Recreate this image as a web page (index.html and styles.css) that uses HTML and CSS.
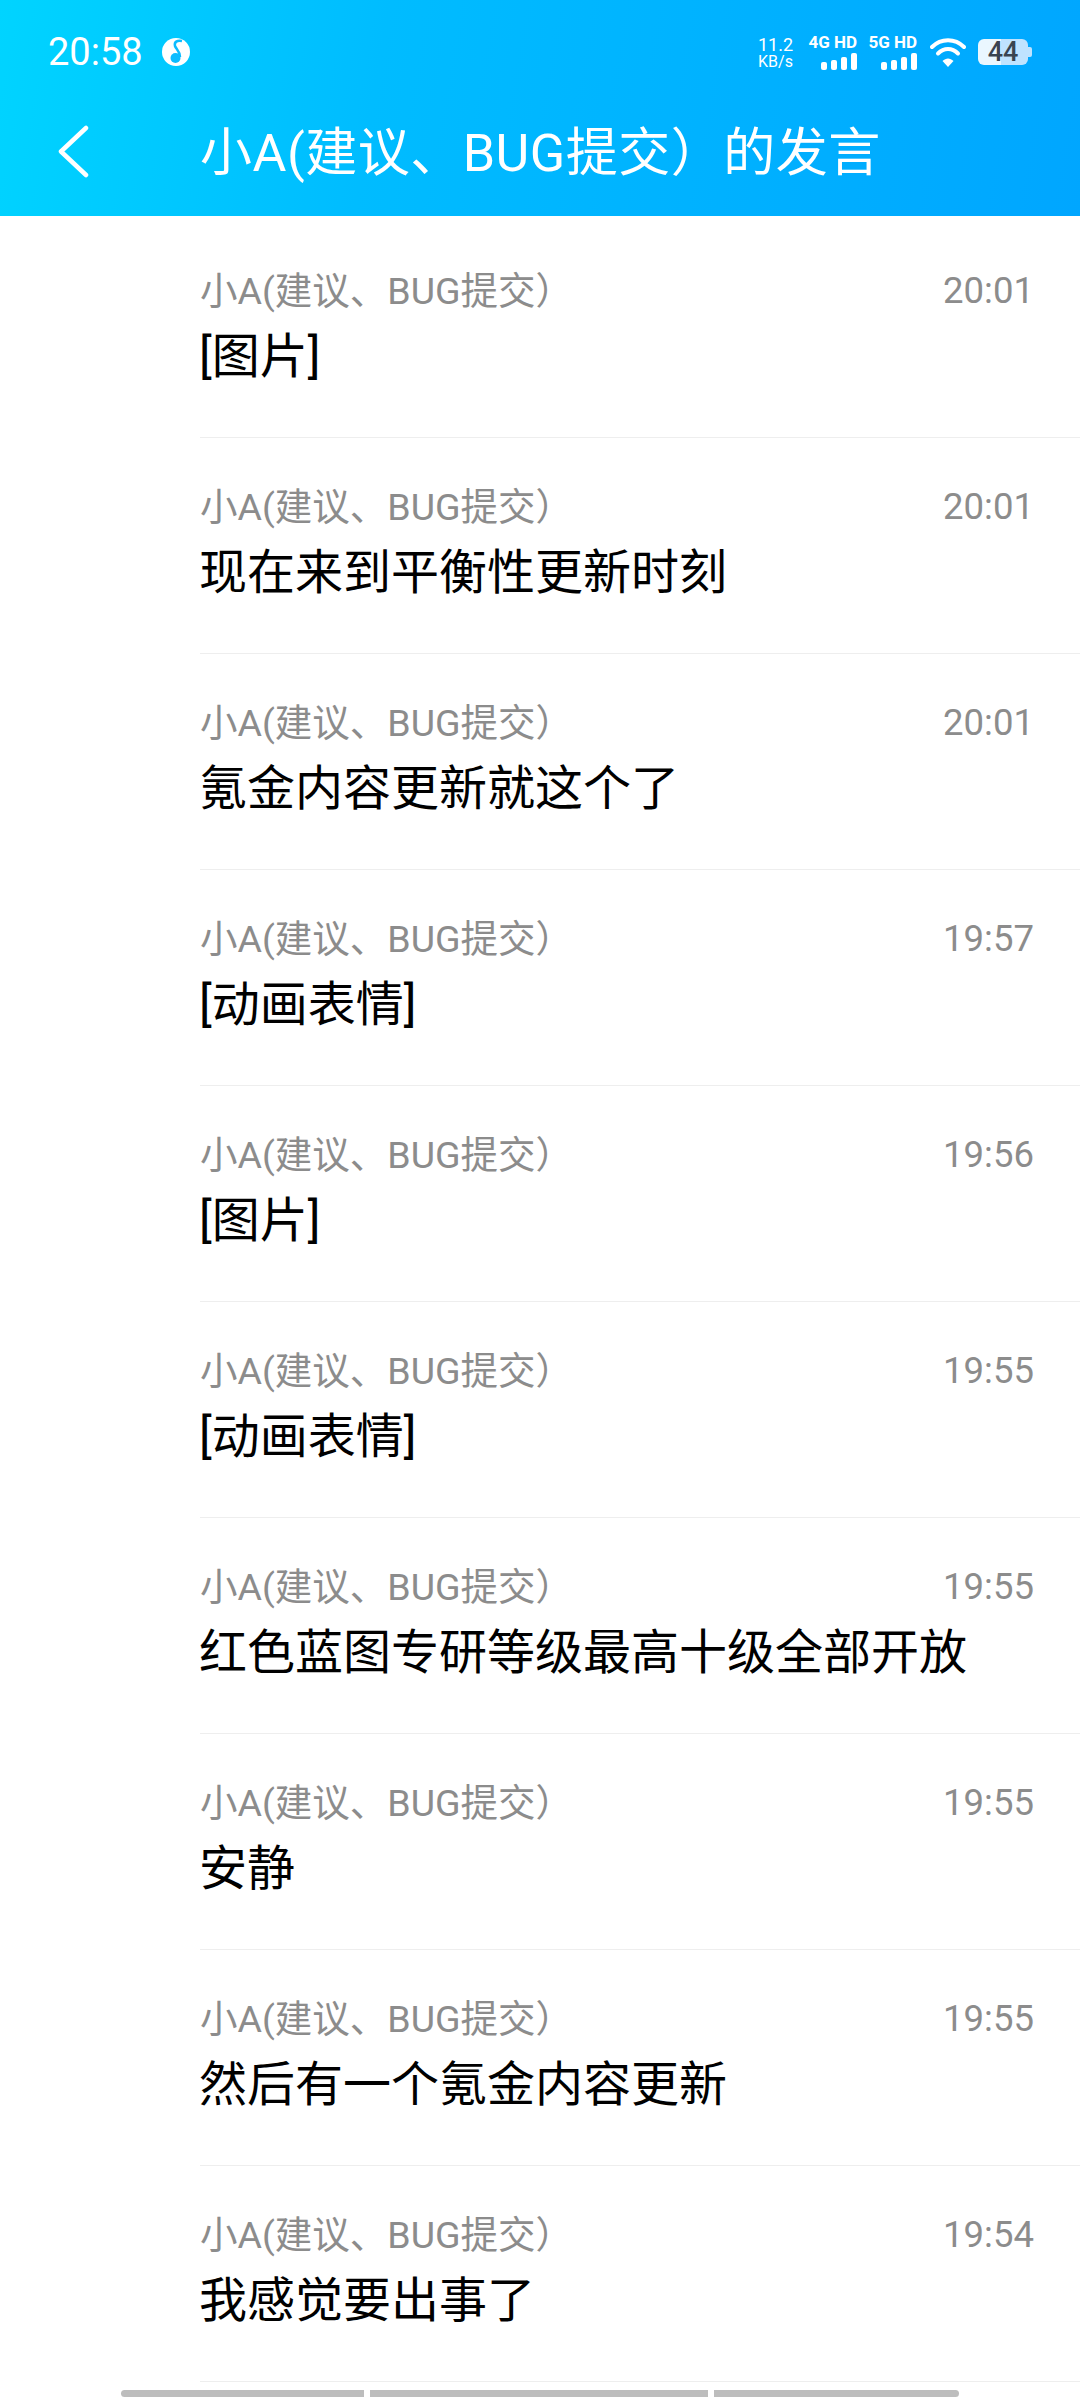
FILE: index.html
```html
<!DOCTYPE html>
<html lang="zh-CN">
<head>
    <meta charset="UTF-8">
    <meta name="viewport" content="width=device-width, initial-scale=1.0">
    <title>小A的发言</title>
    <link rel="stylesheet" href="styles.css">
</head>
<body>
    <header class="top">
        <div class="status">
            <span class="clock">20:58</span>
            <svg class="music" viewBox="0 0 28 28">
                <circle cx="14" cy="14" r="14" fill="#fff"/>
                <path d="M20 3 C15 2 12 4 13 8 C14 11 18 13 18 19" fill="none" stroke="#0cbcff" stroke-width="2.500"/>
                <circle cx="13.500" cy="20" r="5" fill="#0cbcff"/>
            </svg>
            <div class="status-right">
                <div class="speed"><span>11.2</span><span class="unit">KB/s</span></div>
                <div class="net">
                    <span class="net-label">4G HD</span>
                    <div class="bars"><i class="b1"></i><i class="b2"></i><i class="b3"></i><i class="b4"></i></div>
                </div>
                <div class="net">
                    <span class="net-label">5G HD</span>
                    <div class="bars"><i class="b1"></i><i class="b2"></i><i class="b3"></i><i class="b4"></i></div>
                </div>
                <svg class="wifi" viewBox="0 0 36 29">
                    <path d="M2 9 C11 0 25 0 34 9" fill="none" stroke="#fff" stroke-width="4" stroke-linecap="round"/>
                    <path d="M8 15.500 C14 9.500 22 9.500 28 15.500" fill="none" stroke="#fff" stroke-width="4" stroke-linecap="round"/>
                    <path d="M12.500 23 L18 29 L23.500 23 C20 19.500 16 19.500 12.500 23 Z" fill="#fff"/>
                </svg>
                <div class="battery"><span class="level">44</span><i class="nub"></i></div>
            </div>
        </div>
        <div class="titlebar">
            <svg class="back" viewBox="0 0 31 53">
                <path d="M28 3 L3 26.500 L28 50" fill="none" stroke="#fff" stroke-width="4.500" stroke-linecap="round" stroke-linejoin="round"/>
            </svg>
            <h1>小A(建议、BUG提交）的发言</h1>
        </div>
    </header>

    <main class="list">
        <div class="row">
            <div class="row-head"><span class="name">小A(建议、BUG提交）</span><span class="time">20:01</span></div>
            <div class="msg">[图片]</div>
        </div>
        <div class="row">
            <div class="row-head"><span class="name">小A(建议、BUG提交）</span><span class="time">20:01</span></div>
            <div class="msg">现在来到平衡性更新时刻</div>
        </div>
        <div class="row">
            <div class="row-head"><span class="name">小A(建议、BUG提交）</span><span class="time">20:01</span></div>
            <div class="msg">氪金内容更新就这个了</div>
        </div>
        <div class="row">
            <div class="row-head"><span class="name">小A(建议、BUG提交）</span><span class="time">19:57</span></div>
            <div class="msg">[动画表情]</div>
        </div>
        <div class="row">
            <div class="row-head"><span class="name">小A(建议、BUG提交）</span><span class="time">19:56</span></div>
            <div class="msg">[图片]</div>
        </div>
        <div class="row">
            <div class="row-head"><span class="name">小A(建议、BUG提交）</span><span class="time">19:55</span></div>
            <div class="msg">[动画表情]</div>
        </div>
        <div class="row">
            <div class="row-head"><span class="name">小A(建议、BUG提交）</span><span class="time">19:55</span></div>
            <div class="msg">红色蓝图专研等级最高十级全部开放</div>
        </div>
        <div class="row">
            <div class="row-head"><span class="name">小A(建议、BUG提交）</span><span class="time">19:55</span></div>
            <div class="msg">安静</div>
        </div>
        <div class="row">
            <div class="row-head"><span class="name">小A(建议、BUG提交）</span><span class="time">19:55</span></div>
            <div class="msg">然后有一个氪金内容更新</div>
        </div>
        <div class="row">
            <div class="row-head"><span class="name">小A(建议、BUG提交）</span><span class="time">19:54</span></div>
            <div class="msg">我感觉要出事了</div>
        </div>
    </main>

    <div class="tabs">
        <i class="tab tab-left"></i>
        <i class="tab tab-mid"></i>
        <i class="tab tab-right"></i>
    </div>
</body>
</html>
```

FILE: styles.css
```css
body {
    margin: 0;
    width: 1080px;
    height: 2400px;
    overflow: hidden;
    background-color: white;
    color: black;
    font-family: Roboto, "Noto Sans CJK SC", sans-serif;
}
.top {
    height: 216px;
    box-sizing: border-box;
    padding-top: 31px;
    background: linear-gradient(100deg, #00d4ff 0%, #00bcff 35%, #00a6ff 100%);
    color: white;
}
.status {
    display: flex;
    align-items: center;
    height: 42px;
    padding: 0 52px 0 48px;
}
.clock {
    font-size: 38px;
    line-height: 42px;
}
.music {
    width: 28px;
    height: 28px;
    margin-left: 19px;
}
.status-right {
    display: flex;
    align-items: center;
    margin-left: auto;
}
.speed {
    display: flex;
    flex-direction: column;
    align-items: center;
    width: 35px;
    font-size: 18px;
    line-height: 18px;
}
.speed .unit {
    font-size: 16px;
    line-height: 15px;
}
.net {
    display: flex;
    flex-direction: column;
    align-items: flex-end;
    width: 48px;
    margin-left: 12px;
}
.speed + .net {
    margin-left: 16px;
}
.net-label {
    font-size: 17px;
    line-height: 16px;
    font-weight: bold;
    white-space: nowrap;
}
.bars {
    display: flex;
    align-items: flex-end;
    gap: 4px;
    height: 18px;
    margin-top: 2px;
}
.bars i {
    width: 6px;
    border-radius: 2px;
    background-color: white;
}
.bars .b1 { height: 8px; }
.bars .b2 { height: 10px; }
.bars .b3 { height: 13px; }
.bars .b4 { height: 17px; }
.wifi {
    width: 36px;
    height: 29px;
    margin-left: 13px;
}
.battery {
    position: relative;
    width: 50px;
    height: 26px;
    margin-left: 12px;
    border-radius: 6px;
    background: linear-gradient(90deg, #eaf7ff 0%, #eaf7ff 47%, #bfe3ff 47%, #bfe3ff 100%);
    color: #3a4450;
    text-align: center;
}
.level {
    font-size: 27px;
    line-height: 26px;
    font-weight: 500;
}
.nub {
    position: absolute;
    right: -4px;
    top: 8px;
    width: 4px;
    height: 10px;
    border-radius: 0 2px 2px 0;
    background-color: #bfe3ff;
}
.titlebar {
    display: flex;
    align-items: center;
    margin-top: 46px;
    padding-left: 58px;
    height: 70px;
}
.back {
    width: 31px;
    height: 53px;
    margin-top: -6px;
}
h1 {
    margin: 0 0 0 111px;
    font-size: 52px;
    font-weight: normal;
    line-height: 70px;
    letter-spacing: 0.5px;
    white-space: nowrap;
}
.list {
    padding-top: 6px;
}
.row {
    box-sizing: border-box;
    height: 216px;
    margin-left: 200px;
    padding-top: 42px;
    padding-right: 46px;
    border-bottom: 1px solid #eeeeee;
}
.row-head {
    display: flex;
    justify-content: space-between;
    align-items: center;
    height: 46px;
    font-size: 37.500px;
    color: #8c8c8c;
}
.time {
    margin-top: 6px;
    font-size: 36.500px;
}
.msg {
    margin-top: 15px;
    margin-left: -1px;
    font-size: 48px;
    line-height: 64px;
    white-space: nowrap;
}
.tabs {
    display: flex;
    gap: 6px;
    margin-top: 8px;
    padding-left: 121px;
}
.tab {
    height: 7px;
    background-color: #bdbdbd;
}
.tab-left {
    width: 243px;
    border-radius: 4px 0 0 4px;
}
.tab-mid {
    width: 338px;
}
.tab-right {
    width: 245px;
    border-radius: 0 4px 4px 0;
}
```
